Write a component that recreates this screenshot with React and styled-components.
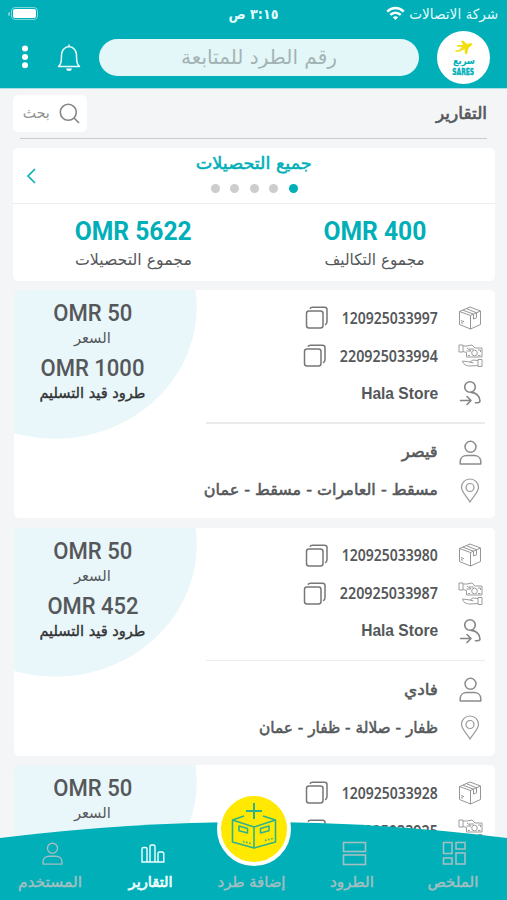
import React, { useLayoutEffect, useRef } from 'react';
import styled, { createGlobalStyle } from 'styled-components';

const TEAL = '#00afb8';

const GlobalStyle = createGlobalStyle`
    * {
        box-sizing: border-box;
    }

    body {
        margin: 0;
        overflow: hidden;
        font-family: 'DejaVu Sans Condensed', 'DejaVu Sans', sans-serif;
    }
`;

const Screen = styled.div`
    position: relative;
    width: 507px;
    height: 900px;
    overflow: hidden;
    background: #f3f5f7;
    color: #55585a;
`;

const FitBox = styled.span`
    display: flex;
    flex: none;
    width: ${(p) => p.$width}px;
    font-size: ${(p) => p.$size}px;
    font-weight: ${(p) => p.$weight || 400};
    font-family: ${(p) => p.$font || 'inherit'};
    color: ${(p) => p.$color || 'inherit'};
    line-height: ${(p) => p.$line || 24}px;
    -webkit-text-stroke: ${(p) => p.$stroke || 0}px currentColor;
`;

const FitInner = styled.span`
    flex: none;
    white-space: nowrap;
    transform-origin: right center;
`;

// keeps a label at a fixed width whatever font it falls back to
const Fit = ({ width, size, weight, font, color, line, stroke, children }) => {
    const ref = useRef(null);

    useLayoutEffect(() => {
        const el = ref.current;
        el.style.transform = 'none';
        const natural = el.getBoundingClientRect().width;
        el.style.transform = `scaleX(${width / natural})`;
    }, [width, children]);

    return (
        <FitBox $width={width} $size={size} $weight={weight} $font={font} $color={color} $line={line} $stroke={stroke}>
            <FitInner ref={ref}>{children}</FitInner>
        </FitBox>
    );
};

const StatusBar = styled.div`
    display: grid;
    grid-template-columns: 1fr auto 1fr;
    align-items: center;
    height: 27px;
    padding: 0 9px 0 8px;
    color: #e4fbfc;
`;

const Carrier = styled.div`
    display: flex;
    align-items: center;
    gap: 4px;
`;

const Battery = styled.div`
    justify-self: end;
    display: flex;
    align-items: center;
    gap: 1px;

    .shell {
        width: 27px;
        height: 13px;
        padding: 1px;
        border: 1px solid #7fd6da;
        border-radius: 4px;
    }

    .level {
        height: 100%;
        background: #fff;
        border-radius: 2px;
    }

    .tip {
        width: 2px;
        height: 4px;
        background: #7fd6da;
        border-radius: 2px 0 0 2px;
    }
`;

const Header = styled.header`
    height: 89px;
    background: ${TEAL};
    border-bottom: 1px solid #a6e0e4;
`;

const HeaderRow = styled.div`
    display: flex;
    align-items: center;
    height: 60px;
    padding: 0 17px 0 20px;
`;

const Logo = styled.div`
    display: flex;
    flex: none;
    flex-direction: column;
    align-items: center;
    width: 53px;
    height: 53px;
    padding-top: 9px;
    margin-left: 18px;
    border-radius: 50%;
    background: #fff;

    svg {
        display: block;
    }
`;

const TrackField = styled.div`
    display: flex;
    align-items: center;
    justify-content: center;
    width: 320px;
    height: 37px;
    border-radius: 19px;
    background: #e4f7f8;
    margin-left: 18px;
`;

const Bell = styled.svg`
    flex: none;
    margin-left: 28px;
`;

const TitleRow = styled.div`
    display: flex;
    align-items: center;
    justify-content: space-between;
    height: 45px;
    margin: 5px 20px 0 20px;
    border-bottom: 1.5px solid #c9cbcd;
    padding-bottom: 6px;
`;

const SearchButton = styled.div`
    display: flex;
    align-items: center;
    justify-content: flex-start;
    gap: 9px;
    width: 74px;
    height: 37px;
    padding-right: 7px;
    margin-left: -7px;
    border-radius: 5px;
    background: #fff;
`;

const Summary = styled.section`
    margin: 9px 12px 0 13px;
    height: 133px;
    border-radius: 5px;
    background: #fff;
`;

const SummaryHead = styled.div`
    display: grid;
    grid-template-columns: 36px 1fr 36px;
    align-items: center;
    height: 56px;
    border-bottom: 1px solid #eceef0;
`;

const Pager = styled.div`
    display: flex;
    flex-direction: column;
    align-items: center;
    gap: 10px;
    padding-bottom: 6px;
`;

const Dots = styled.div`
    display: flex;
    gap: 10.5px;
`;

const Dot = styled.span`
    width: 9px;
    height: 9px;
    border-radius: 50%;
    background: ${(p) => (p.$on ? TEAL : '#cdcdcd')};
`;

const Totals = styled.div`
    display: grid;
    grid-template-columns: 1fr 1fr;
    padding-top: 14px;
`;

const Total = styled.div`
    display: flex;
    flex-direction: column;
    align-items: center;
    gap: 2px;
`;

const List = styled.div`
    display: flex;
    flex-direction: column;
    gap: 9.5px;
    padding: 9px 12px 0 14px;
`;

const Card = styled.article`
    display: flex;
    justify-content: space-between;
    height: 228px;
    border-radius: 5px;
    background: radial-gradient(ellipse 142px 132px at 41px 17px, #e9f6fa 99.4%, #fff 100%);
`;

const Details = styled.div`
    width: 279px;
    margin-right: 10px;
    padding-top: 9px;
`;

const Row = styled.div`
    display: flex;
    align-items: center;
    height: 37.7px;

    .icon {
        display: flex;
        flex: none;
        justify-content: center;
        width: 30px;
        margin-left: 17px;
    }

    .copy {
        margin-right: 14px;
    }
`;

const Divider = styled.div`
    height: 1.5px;
    margin: 10px 0;
    background: #e9ebed;
`;

const Prices = styled.div`
    display: flex;
    flex-direction: column;
    align-items: center;
    width: 157px;
    padding-top: 12px;
`;

const Gap = styled.div`
    height: ${(p) => p.$h}px;
`;

const NavBar = styled.nav`
    position: absolute;
    left: 0;
    right: 0;
    bottom: 0;
    height: 78px;
`;

const Wave = styled.svg`
    position: absolute;
    inset: 0;
`;

const Tabs = styled.div`
    position: relative;
    display: grid;
    grid-template-columns: repeat(5, 1fr);
    height: 100%;
    padding: 17px 4px 0 0;
`;

const Tab = styled.div`
    display: flex;
    flex-direction: column;
    align-items: center;
    gap: 2px;
    color: ${(p) => (p.$active ? '#f2ffff' : '#a3bfc1')};

    .slot {
        display: flex;
        align-items: center;
        height: 29px;
        padding-left: 4px;
    }
`;

const AddButton = styled.div`
    position: absolute;
    left: 217px;
    top: -30px;
    display: flex;
    align-items: center;
    justify-content: center;
    width: 74px;
    height: 74px;
    border: 4px solid #fff;
    border-radius: 50%;
    background: #ffe900;

    svg {
        margin-bottom: 4px;
    }
`;

const BoxIcon = () => (
    <svg width="24" height="24" viewBox="0 0 24 24" fill="none" stroke="#969696" strokeWidth="1" strokeLinejoin="round">
        <path d="M12 1 L22.5 5 V18.5 L12.5 23 L1.5 18.5 V5.5 Z" />
        <path d="M1.5 5.5 L12.5 9.5 L22.5 5 M12.5 9.5 V23" />
        <path d="M5 4.2 L15.5 8.2 V13 L18.5 11.8 V6.8 L8.5 2.7 M3 14.5 L6 15.7 M3 16.5 L5 17.3" />
    </svg>
);

const CashIcon = () => (
    <svg width="25" height="25" viewBox="0 0 25 25" fill="none" stroke="#9c9c9c" strokeWidth="1" strokeLinejoin="round">
        <path d="M1 2 H5 V9 H1 Z M5 3 H9 L14 2 L17 5 H24 V14 H8.5 V9.5 L5 8.5" />
        <path d="M9 5 L13 8 H8.5 M11 6 H16 M10 12.5 H12 M20 7 H22.5 V9 M20 12.5 H22.5" />
        <circle cx="16.5" cy="10" r="2.8" />
        <path d="M20 16.5 H24 V23.5 H20 Z M20 17.5 L15 17 L12 19 L4.5 18 C5 21 8 23 12 23 L20 22.5 M12 19 L15.5 20" />
    </svg>
);

const SenderIcon = () => (
    <svg width="24" height="26" viewBox="0 0 24 26" fill="none" stroke="#858585" strokeWidth="1.6" strokeLinecap="round" strokeLinejoin="round">
        <circle cx="12" cy="7" r="5.3" />
        <path d="M13 12.4 C18.5 12.7 22 16.5 22 21 C22 22.5 21 22.8 17.5 22.8" />
        <path d="M2.5 20.5 H12.5 M9 16.5 L13 20.5 L9 24.5" />
    </svg>
);

const UserIcon = ({ color = '#8c8c8c', size = 25 }) => (
    <svg width={size} height={size} viewBox="0 0 25 25" fill="none" stroke={color} strokeWidth="1.5" strokeLinejoin="round">
        <circle cx="12.5" cy="6.8" r="5.5" />
        <path d="M2.2 24 V21.5 C2.2 18 5 15.5 9 15.5 H16 C20 15.5 22.8 18 22.8 21.5 V24 Z" />
    </svg>
);

const PinIcon = () => (
    <svg width="20" height="25" viewBox="0 0 20 25" fill="none" stroke="#999" strokeWidth="1.2">
        <path d="M10 24 C7 19 1.5 14 1.5 9.3 A8.5 8.3 0 0 1 18.5 9.3 C18.5 14 13 19 10 24 Z" />
        <circle cx="10" cy="9.5" r="4" />
    </svg>
);

const CopyIcon = () => (
    <svg className="copy" width="23" height="23" viewBox="0 0 23 23" fill="none" stroke="#777" strokeWidth="1.5">
        <rect x="1.5" y="5" width="16.5" height="17" rx="2.5" />
        <path d="M5 2.8 Q5.5 1.2 7.5 1.2 H19.5 Q22 1.2 22 3.5 V15.5 Q22 18 20 18.8" />
    </svg>
);

const WifiIcon = () => (
    <svg width="19" height="15" viewBox="0 0 19 15" fill="none" stroke="#fff" strokeWidth="2.5">
        <path d="M1.3 5.6 C6 0.8 13 0.8 17.7 5.6" />
        <path d="M4.3 8.9 C7.3 6 11.7 6 14.7 8.9" />
        <path d="M9.5 14 L6.8 11.2 C8.2 9.9 10.8 9.9 12.2 11.2 Z" fill="#fff" stroke="none" />
    </svg>
);

const ParcelIcon = () => (
    <svg width="46" height="50" viewBox="0 0 46 50" fill="none" stroke="#2eb28b" strokeWidth="1.6" strokeLinejoin="round">
        <path d="M23 1 V17 M15 9 H31" strokeWidth="2" />
        <path d="M1.5 18 L23 25 L44.5 18 V40 L23 46 L1.5 40 Z M23 25 V46" />
        <path d="M1.5 18 L13 14 M44.5 18 L32 14" />
        <path d="M8 24 L16.5 26.5 V31 L8 28.8 Z M38 24 L29.5 26.5 V31 L38 28.8 Z" />
        <path d="M12 39.5 L20 41.5 M34 38.5 L42 36.5" strokeDasharray="1.5 1.7" />
    </svg>
);

const SummaryIcon = () => (
    <svg width="25" height="25" viewBox="0 0 25 25" fill="none" stroke="currentColor" strokeWidth="1.6">
        <rect x="1.5" y="1.5" width="8.5" height="11" />
        <rect x="14" y="1.5" width="9" height="6.5" />
        <rect x="1.5" y="17" width="8.5" height="6" />
        <rect x="14" y="12" width="9" height="11" />
    </svg>
);

const ParcelsIcon = () => (
    <svg width="25" height="25" viewBox="0 0 25 25" fill="none" stroke="currentColor" strokeWidth="1.6">
        <rect x="1.5" y="1.5" width="22" height="9" />
        <rect x="1.5" y="14" width="22" height="9.5" />
    </svg>
);

const ReportsIcon = () => (
    <svg width="24" height="19" viewBox="0 0 24 19" fill="none" stroke="currentColor" strokeWidth="1.4">
        <path d="M1 18 V5 Q1 3.5 2.5 3.5 H4.5 Q6 3.5 6 5 V18 Z M9 18 V2.5 Q9 1 10.5 1 H12.5 Q14 1 14 2.5 V18 Z M17 18 V9.5 Q17 8 18.5 8 H21 Q22.8 8 22.8 9.5 V18 Z M6 18 H9 M14 18 H17" />
    </svg>
);

const parcels = [
    {
        id: '120925033997',
        payment: '220925033994',
        store: 'Hala Store',
        name: 'قيصر',
        nameWidth: 36,
        place: 'مسقط - العامرات - مسقط - عمان',
        placeWidth: 234,
        amount: 'OMR 1000',
        amountWidth: 104,
    },
    {
        id: '120925033980',
        payment: '220925033987',
        store: 'Hala Store',
        name: 'فادي',
        nameWidth: 34,
        place: 'ظفار - صلالة - ظفار - عمان',
        placeWidth: 179,
        amount: 'OMR 452',
        amountWidth: 91,
    },
    {
        id: '120925033928',
        payment: '220925033925',
    },
];

const ParcelCard = ({ item }) => (
    <Card>
        <Details>
            <Row>
                <div className="icon"><BoxIcon /></div>
                <Fit width={96} size={16} weight={600} font="'Noto Sans'">{item.id}</Fit>
                <CopyIcon />
            </Row>
            <Row>
                <div className="icon"><CashIcon /></div>
                <Fit width={98} size={16} weight={600} font="'Noto Sans'">{item.payment}</Fit>
                <CopyIcon />
            </Row>
            {
                item.store &&
                <>
                    <Row>
                        <div className="icon"><SenderIcon /></div>
                        <Fit width={77} size={16} weight={700} font="'Liberation Sans'" line={27}>{item.store}</Fit>
                    </Row>
                    <Divider />
                    <Row>
                        <div className="icon"><UserIcon /></div>
                        <Fit width={item.nameWidth} size={16} stroke={0.5}>{item.name}</Fit>
                    </Row>
                    <Row>
                        <div className="icon"><PinIcon /></div>
                        <Fit width={item.placeWidth} size={16} stroke={0.5}>{item.place}</Fit>
                    </Row>
                </>
            }
        </Details>
        <Prices>
            <Fit width={79} size={23} weight={500} font="Roboto">OMR 50</Fit>
            <Fit width={37} size={15}>السعر</Fit>
            <Gap $h={7} />
            {
                item.amount &&
                <>
                    <Fit width={item.amountWidth} size={23} weight={500} font="Roboto">{item.amount}</Fit>
                    <Fit width={106} size={15} color="#303234" stroke={0.35}>طرود قيد التسليم</Fit>
                </>
            }
        </Prices>
    </Card>
);

const App = () => (
    <>
        <GlobalStyle />
        <Screen dir="rtl">
            <Header>
                <StatusBar>
                    <Carrier>
                        <Fit width={89} size={14}>شركة الاتصالات</Fit>
                        <WifiIcon />
                    </Carrier>
                    <Fit width={50} size={14} weight={700}>٣:١٥ ص</Fit>
                    <Battery>
                        <div className="shell"><div className="level" /></div>
                        <div className="tip" />
                    </Battery>
                </StatusBar>
                <HeaderRow>
                    <Logo>
                        <svg width="20" height="15" viewBox="0 0 20 15">
                            <path d="M3 5 L9 5 L7 1 L9 0.5 L13 4 L17 3 Q19.5 4 17.5 5.5 L14.5 8 L13 14 L11 14 L10.5 9 L6 11.5 L2 12 L1 10.5 L5 10 L8 7 L3 6.5 Z" fill="#f2df13" />
                        </svg>
                        <Fit width={22} size={10} weight={700} color={TEAL} line={12}>سريع</Fit>
                        <Fit width={22} size={8.5} weight={700} color={TEAL} line={10} font="'DejaVu Sans'" stroke={0.4}>SARES</Fit>
                    </Logo>
                    <TrackField>
                        <Fit width={156} size={20} color="#a3b3b5" line={30}>رقم الطرد للمتابعة</Fit>
                    </TrackField>
                    <Bell width="24" height="29" viewBox="0 0 24 29" fill="none" stroke="#e6fbfc" strokeWidth="1.5" strokeLinejoin="round">
                        <path d="M12 1.5 V4 M12 3.5 C7 4 4.5 8 4.5 12 C4.5 19 4 21 1.5 23.5 H22.5 C20 21 19.5 19 19.5 12 C19.5 8 17 4 12 3.5 Z" />
                        <path d="M9 25.5 H15 Q14.5 28 12 28 Q9.5 28 9 25.5 Z" fill="#fff" stroke="none" />
                    </Bell>
                    <svg width="8" height="24" viewBox="0 0 8 24" fill="#fff">
                        <circle cx="4" cy="3.5" r="3" />
                        <circle cx="4" cy="12" r="3" />
                        <circle cx="4" cy="20.3" r="3" />
                    </svg>
                </HeaderRow>
            </Header>
            <TitleRow>
                <Fit width={51} size={17} stroke={0.6}>التقارير</Fit>
                <SearchButton>
                    <svg width="21" height="21" viewBox="0 0 21 21" fill="none" stroke="#858585" strokeWidth="1.6">
                        <circle cx="9.3" cy="9.3" r="8" />
                        <path d="M15 15 L20 20" />
                    </svg>
                    <Fit width={27} size={15} color="#929292">بحث</Fit>
                </SearchButton>
            </TitleRow>
            <Summary>
                <SummaryHead>
                    <span />
                    <Pager>
                        <Fit width={116} size={17} stroke={0.5} color={TEAL} line={21}>جميع التحصيلات</Fit>
                        <Dots>
                            <Dot $on />
                            <Dot />
                            <Dot />
                            <Dot />
                            <Dot />
                        </Dots>
                    </Pager>
                    <svg width="36" height="16" viewBox="0 0 36 16" fill="none" stroke={TEAL} strokeWidth="1.6">
                        <path d="M22 1 L15 8 L22 15" />
                    </svg>
                </SummaryHead>
                <Totals>
                    <Total>
                        <Fit width={103} size={25} weight={700} font="Roboto" color={TEAL} line={28}>OMR 400</Fit>
                        <Fit width={100} size={16}>مجموع التكاليف</Fit>
                    </Total>
                    <Total>
                        <Fit width={117} size={25} weight={700} font="Roboto" color={TEAL} line={28}>OMR 5622</Fit>
                        <Fit width={117} size={16}>مجموع التحصيلات</Fit>
                    </Total>
                </Totals>
            </Summary>
            <List>
                {parcels.map((item) => (
                    <ParcelCard key={item.id} item={item} />
                ))}
            </List>
            <NavBar>
                <Wave width="507" height="78" viewBox="0 0 507 78">
                    <path d="M0 16 Q130 0 253 0 Q380 0 507 16 V78 H0 Z" fill={TEAL} />
                </Wave>
                <Tabs>
                    <Tab>
                        <div className="slot"><SummaryIcon /></div>
                        <Fit width={51} size={15} stroke={0.4}>الملخص</Fit>
                    </Tab>
                    <Tab>
                        <div className="slot"><ParcelsIcon /></div>
                        <Fit width={44} size={15} stroke={0.4}>الطرود</Fit>
                    </Tab>
                    <Tab>
                        <div className="slot" />
                        <Fit width={68} size={15} stroke={0.4}>إضافة طرد</Fit>
                    </Tab>
                    <Tab $active>
                        <div className="slot"><ReportsIcon /></div>
                        <Fit width={44} size={15} stroke={0.6}>التقارير</Fit>
                    </Tab>
                    <Tab>
                        <div className="slot"><UserIcon color="currentColor" size={23} /></div>
                        <Fit width={64} size={15} stroke={0.4}>المستخدم</Fit>
                    </Tab>
                </Tabs>
                <AddButton><ParcelIcon /></AddButton>
            </NavBar>
        </Screen>
    </>
);

export default App;
